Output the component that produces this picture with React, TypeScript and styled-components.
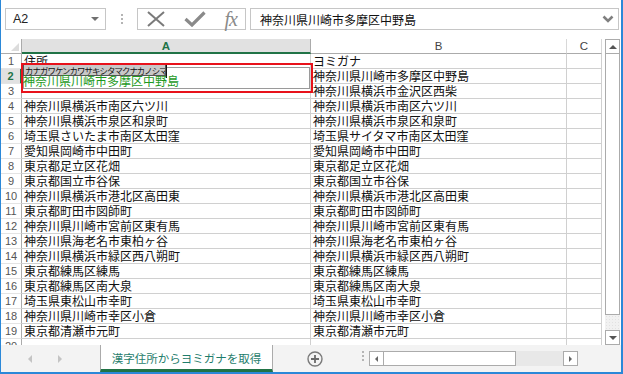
import React from "react";
import styled, { createGlobalStyle } from "styled-components";

const JP = `"Noto Sans CJK JP", "Liberation Sans", sans-serif`;
const UI = `"Liberation Sans", Arial, sans-serif`;

const GlobalStyle = createGlobalStyle`
  html, body { margin: 0; padding: 0; background: #fff; }
  body { font-family: ${UI}; }
`;

const rows: [string, string][] = [
  ["住所", "ヨミガナ"],
  ["", "神奈川県川崎市多摩区中野島"],
  ["", "神奈川県横浜市金沢区西柴"],
  ["神奈川県横浜市南区六ツ川", "神奈川県横浜市南区六ツ川"],
  ["神奈川県横浜市泉区和泉町", "神奈川県横浜市泉区和泉町"],
  ["埼玉県さいたま市南区太田窪", "埼玉県サイタマ市南区太田窪"],
  ["愛知県岡崎市中田町", "愛知県岡崎市中田町"],
  ["東京都足立区花畑", "東京都足立区花畑"],
  ["東京都国立市谷保", "東京都国立市谷保"],
  ["神奈川県横浜市港北区高田東", "神奈川県横浜市港北区高田東"],
  ["東京都町田市図師町", "東京都町田市図師町"],
  ["神奈川県川崎市宮前区東有馬", "神奈川県川崎市宮前区東有馬"],
  ["神奈川県海老名市東柏ヶ谷", "神奈川県海老名市東柏ヶ谷"],
  ["神奈川県横浜市緑区西八朔町", "神奈川県横浜市緑区西八朔町"],
  ["東京都練馬区練馬", "東京都練馬区練馬"],
  ["東京都練馬区南大泉", "東京都練馬区南大泉"],
  ["埼玉県東松山市幸町", "埼玉県東松山市幸町"],
  ["神奈川県川崎市幸区小倉", "神奈川県川崎市幸区小倉"],
  ["東京都清瀬市元町", "東京都清瀬市元町"],
  ["", ""],
];

const Window = styled.div`
  width: 623px;
  height: 374px;
  box-sizing: border-box;
  border-left: 1px solid #2b88d8;
  border-right: 2px solid #2b88d8;
  border-bottom: 2px solid #2b88d8;
  display: flex;
  flex-direction: column;
  background: #fff;
  overflow: hidden;
`;

const FormulaBar = styled.div`
  height: 39px;
  box-sizing: border-box;
  padding: 8px 2px 0 4px;
  display: flex;
  align-items: flex-start;
`;

const Field = styled.div`
  height: 22px;
  box-sizing: border-box;
  border: 1px solid #c6c6c6;
  background: #fff;
  display: flex;
  align-items: center;
`;

const NameBox = styled(Field)`
  width: 101px;
  padding: 0 6px 0 7px;
  justify-content: space-between;
  font-size: 12.5px;
  color: #222;
`;

const DownTri = styled.span`
  width: 0;
  height: 0;
  border-left: 4px solid transparent;
  border-right: 4px solid transparent;
  border-top: 4px solid #707070;
`;

const Dots = styled.div<{ $w: number }>`
  width: ${(p) => p.$w}px;
  height: 22px;
  display: flex;
  flex-direction: column;
  align-items: center;
  justify-content: center;
  gap: 2px;
  span {
    width: 2px;
    height: 2px;
    background: #b4b4b4;
  }
`;

const ButtonBox = styled(Field)`
  width: 109px;
  padding: 0 4px 0 9px;
  justify-content: space-between;
`;

const Fx = styled.span`
  font-family: "Liberation Serif", serif;
  font-style: italic;
  font-size: 20px;
  color: #8a8a8a;
  letter-spacing: -1px;
  line-height: 20px;
  margin-right: 4px;
`;

const Input = styled(Field)`
  flex: 1;
  margin-left: 4px;
  padding: 0 4px 0 9px;
  justify-content: space-between;
  font-family: ${JP};
  font-size: 12px;
  color: #111;
`;

const Main = styled.div`
  display: flex;
  height: 306px;
`;

const Sheet = styled.div`
  width: 601px;
  display: grid;
  grid-template-columns: 21px 289px 256px 35px;
  grid-auto-rows: 15px;
  overflow: hidden;
  align-content: start;
`;

const Corner = styled.div`
  position: relative;
  box-sizing: border-box;
  border-right: 1px solid #ababab;
  border-bottom: 1px solid #ababab;
  &::after {
    content: "";
    position: absolute;
    right: 2px;
    bottom: 2px;
    border-left: 8px solid transparent;
    border-bottom: 8px solid #dcdcdc;
  }
`;

const ColHead = styled.div<{ $active?: boolean }>`
  box-sizing: border-box;
  background: ${(p) => (p.$active ? "#e1e1e1" : "#fff")};
  border-right: 1px solid ${(p) => (p.$active ? "#ababab" : "#d8d8d8")};
  border-bottom: ${(p) => (p.$active ? "2px solid #217346" : "1px solid #ababab")};
  color: ${(p) => (p.$active ? "#217346" : "#444")};
  font-weight: ${(p) => (p.$active ? "bold" : "normal")};
  font-size: 11.5px;
  line-height: 14px;
  text-align: center;
`;

const RowHead = styled.div<{ $active?: boolean }>`
  box-sizing: border-box;
  background: ${(p) => (p.$active ? "#e1e1e1" : "#fff")};
  border-right: ${(p) => (p.$active ? "2px solid #217346" : "1px solid #ababab")};
  border-bottom: 1px solid #e4e4e4;
  color: ${(p) => (p.$active ? "#217346" : "#555")};
  font-weight: ${(p) => (p.$active ? "bold" : "normal")};
  font-size: 11px;
  line-height: 14px;
  text-align: center;
`;

const Cell = styled.div`
  position: relative;
  box-sizing: border-box;
  border-right: 1px solid #d0d0d0;
  border-bottom: 1px solid #d0d0d0;
  padding-left: 2px;
  font-family: ${JP};
  font-size: 12px;
  line-height: 14px;
  color: #111;
  white-space: nowrap;
`;

const RedFrame = styled.div`
  position: absolute;
  left: -1px;
  top: -6px;
  width: 292px;
  height: 30px;
  box-sizing: border-box;
  border: 2px solid #e8121b;
  z-index: 3;
`;

const EditBox = styled.div`
  position: absolute;
  left: 1px;
  top: -2px;
  width: 287px;
  height: 22px;
  box-sizing: border-box;
  border: 1px solid #9a9a9a;
  background: #fff;
  z-index: 1;
`;

const Phonetic = styled.div`
  position: absolute;
  left: 1px;
  top: -5px;
  width: 143px;
  height: 12px;
  box-sizing: border-box;
  border: 1px solid #555;
  background: #c8c8c8;
  font-family: ${JP};
  font-size: 8.4px;
  line-height: 10px;
  letter-spacing: -0.9px;
  padding-left: 1px;
  color: #111;
  overflow: hidden;
  z-index: 2;
`;

const Caret = styled.div`
  position: absolute;
  left: 144px;
  top: -6px;
  width: 1px;
  height: 15px;
  background: #111;
  z-index: 2;
`;

const EditText = styled.div`
  position: absolute;
  left: 1px;
  top: 5px;
  font-family: ${JP};
  font-size: 12px;
  line-height: 14px;
  color: #1e9a1e;
  z-index: 2;
`;

const VScroll = styled.div`
  width: 15px;
  margin-left: 3px;
  display: flex;
  flex-direction: column;
`;

const ScrollBtn = styled.div`
  width: 15px;
  height: 15px;
  box-sizing: border-box;
  border: 1px solid #ababab;
  background: #fff;
  display: flex;
  align-items: center;
  justify-content: center;
`;

const VThumb = styled.div`
  height: 261px;
  box-sizing: border-box;
  border: 1px solid #ababab;
  border-top: none;
  background: #fff;
`;

const VTrack = styled.div`
  flex: 1;
  background-color: #f1f1f1;
  background-image: radial-gradient(#e2e2e2 0.6px, transparent 0.8px);
  background-size: 3px 3px;
`;

const Tri = styled.span<{ $dir: "up" | "down" | "left" | "right"; $c?: string; $s?: number }>`
  width: 0;
  height: 0;
  ${(p) => {
    const s = p.$s ?? 4;
    const c = p.$c ?? "#555";
    if (p.$dir === "up")
      return `border-left:${s}px solid transparent;border-right:${s}px solid transparent;border-bottom:${s}px solid ${c};`;
    if (p.$dir === "down")
      return `border-left:${s}px solid transparent;border-right:${s}px solid transparent;border-top:${s}px solid ${c};`;
    if (p.$dir === "left")
      return `border-top:${s}px solid transparent;border-bottom:${s}px solid transparent;border-right:${s}px solid ${c};`;
    return `border-top:${s}px solid transparent;border-bottom:${s}px solid transparent;border-left:${s}px solid ${c};`;
  }}
`;

const TabBar = styled.div`
  height: 27px;
  background: #f3f3f3;
  display: flex;
  align-items: stretch;
`;

const TabNav = styled.div`
  width: 99px;
  display: flex;
  align-items: center;
  padding-left: 27px;
  box-sizing: border-box;
  gap: 26px;
`;

const Tab = styled.div`
  width: 173px;
  box-sizing: border-box;
  background: #fff;
  border-left: 1px solid #ababab;
  border-right: 1px solid #ababab;
  border-bottom: 3px solid #217346;
  display: flex;
  align-items: center;
  justify-content: center;
  font-family: ${JP};
  font-size: 11.5px;
  color: #1f7d6c;
  padding-top: 2px;
`;

const AddSheet = styled.div`
  width: 86px;
  display: flex;
  align-items: center;
  padding-left: 34px;
  box-sizing: border-box;
`;

const HScroll = styled.div`
  display: flex;
  align-items: center;
  margin-left: 2px;
`;

const HBtn = styled(ScrollBtn)``;

const HThumb = styled.div`
  width: 132px;
  height: 15px;
  box-sizing: border-box;
  border: 1px solid #ababab;
  border-left: none;
  background: #fff;
`;

const HTrack = styled.div`
  width: 47px;
  height: 15px;
  background: #e8e8e8;
`;

export default function App() {
  return (
    <>
      <GlobalStyle />
      <Window>
        <FormulaBar>
          <NameBox>
            <span>A2</span>
            <DownTri />
          </NameBox>
          <Dots $w={31}>
            <span />
            <span />
            <span />
          </Dots>
          <ButtonBox>
            <svg width="18" height="16" viewBox="0 0 18 16">
              <path d="M1 1 L17 15 M17 1 L1 15" stroke="#7a7a7a" strokeWidth="2" fill="none" />
            </svg>
            <svg width="22" height="16" viewBox="0 0 22 16">
              <path d="M1.5 8 L8 14 L20.5 1.5" stroke="#8a8a8a" strokeWidth="3.2" fill="none" />
            </svg>
            <Fx>fx</Fx>
          </ButtonBox>
          <Input>
            <span>神奈川県川崎市多摩区中野島</span>
            <svg width="12" height="8" viewBox="0 0 12 8">
              <path d="M1.5 1.5 L6 6 L10.5 1.5" stroke="#808080" strokeWidth="2.6" fill="none" />
            </svg>
          </Input>
        </FormulaBar>

        <Main>
          <Sheet>
            <Corner />
            <ColHead $active>A</ColHead>
            <ColHead>B</ColHead>
            <ColHead>C</ColHead>
            {rows.map(([a, b], i) => (
              <React.Fragment key={i}>
                <RowHead $active={i === 1}>{i + 1}</RowHead>
                {i === 1 ? (
                  <Cell>
                    <EditBox />
                    <Phonetic>カナガワケンカワサキシタマクナカノシマ</Phonetic>
                    <Caret />
                    <EditText>神奈川県川崎市多摩区中野島</EditText>
                    <RedFrame />
                  </Cell>
                ) : (
                  <Cell>{a}</Cell>
                )}
                <Cell>{b}</Cell>
                <Cell />
              </React.Fragment>
            ))}
          </Sheet>
          <VScroll>
            <ScrollBtn>
              <Tri $dir="up" $s={4} />
            </ScrollBtn>
            <VThumb />
            <VTrack />
            <ScrollBtn>
              <Tri $dir="down" $s={4} />
            </ScrollBtn>
          </VScroll>
        </Main>

        <TabBar>
          <TabNav>
            <Tri $dir="left" $c="#c4c4c4" $s={4} />
            <Tri $dir="right" $c="#c4c4c4" $s={4} />
          </TabNav>
          <Tab>漢字住所からヨミガナを取得</Tab>
          <AddSheet>
            <svg width="16" height="16" viewBox="0 0 16 16">
              <circle cx="8" cy="8" r="7" stroke="#7a7a7a" strokeWidth="1.4" fill="none" />
              <path d="M8 4 V12 M4 8 H12" stroke="#6a6a6a" strokeWidth="1.8" />
            </svg>
          </AddSheet>
          <Dots $w={8}>
            <span />
            <span />
            <span />
          </Dots>
          <HScroll>
            <HBtn>
              <Tri $dir="left" $s={3} $c="#666" />
            </HBtn>
            <HThumb />
            <HTrack />
            <HBtn>
              <Tri $dir="right" $s={3} $c="#666" />
            </HBtn>
          </HScroll>
        </TabBar>
      </Window>
    </>
  );
}
